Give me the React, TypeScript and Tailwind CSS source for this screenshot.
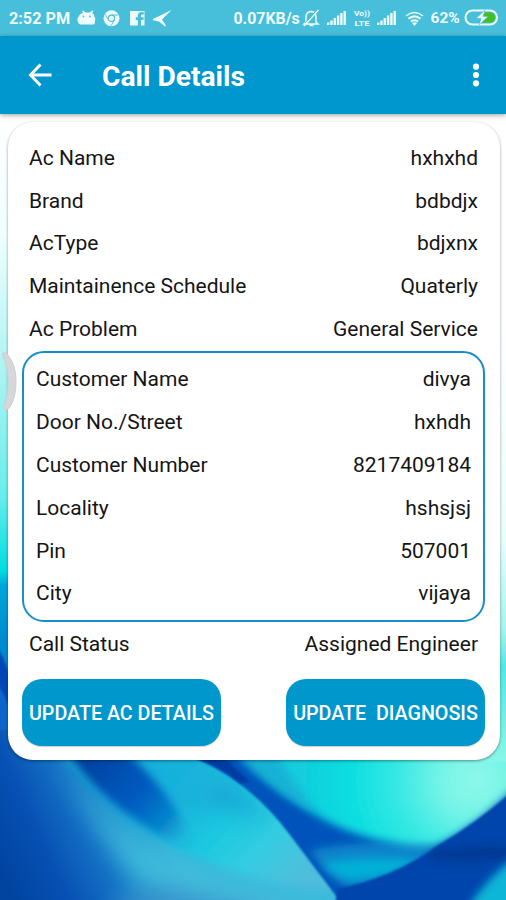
import { ReactNode } from 'react';

interface Detail {
  label: string;
  value: string;
}

const acDetails: Detail[] = [
  { label: 'Ac Name', value: 'hxhxhd' },
  { label: 'Brand', value: 'bdbdjx' },
  { label: 'AcType', value: 'bdjxnx' },
  { label: 'Maintainence Schedule', value: 'Quaterly' },
  { label: 'Ac Problem', value: 'General Service' },
];

const customerDetails: Detail[] = [
  { label: 'Customer Name', value: 'divya' },
  { label: 'Door No./Street', value: 'hxhdh' },
  { label: 'Customer Number', value: '8217409184' },
  { label: 'Locality', value: 'hshsjsj' },
  { label: 'Pin', value: '507001' },
  { label: 'City', value: 'vijaya' },
];

export default function App() {
  return (
    <div className="relative flex h-[900px] w-[506px] flex-col overflow-hidden font-['Roboto',sans-serif]">
      <Wallpaper />
      <StatusBar />
      <AppBar />
      <main className="relative mt-2 ml-[7.5px] h-[638px] w-[492px] rounded-[25px] bg-white px-[14.5px] pt-[15px] shadow-[0_1px_3px_rgba(0,0,0,0.4)]">
        <div className="h-[213.5px] px-[7px]">
          {acDetails.map((item) => (
            <DetailRow key={item.label} {...item} />
          ))}
        </div>
        <section className="h-[271px] rounded-[22px] border-2 border-[#168fc8] px-[12px] pt-[6px]">
          {customerDetails.map((item) => (
            <DetailRow key={item.label} {...item} />
          ))}
        </section>
        <div className="px-[7px] pt-[1.5px]">
          <DetailRow label="Call Status" value="Assigned Engineer" />
        </div>
        <div className="mt-[13px] flex justify-between">
          <ActionButton>UPDATE AC DETAILS</ActionButton>
          <ActionButton>UPDATE&nbsp; DIAGNOSIS</ActionButton>
        </div>
      </main>

      {/* Edge handle of the floating quick menu */}
      <svg className="absolute top-[351px] left-0" width="18" height="62" viewBox="0 0 18 62">
        <path d="M2 3Q5 0 8 4Q16 14 16 30Q16 47 10 56Q6 61 3 57Q8 45 8 30Q8 15 2 3Z" fill="#d6d7d8" stroke="#cbd0d0" />
      </svg>
    </div>
  );
}

function DetailRow({ label, value }: Detail) {
  return (
    <div className="flex h-[42.8px] items-center justify-between text-[21px] leading-none whitespace-pre text-[#151515]">
      <span>{label}</span>
      <span>{value}</span>
    </div>
  );
}

function ActionButton({ children }: { children: ReactNode }) {
  return (
    <button className="h-[67px] w-[199px] rounded-[20px] bg-[#0097cd] pt-[2px] text-[19.7px] font-medium whitespace-nowrap text-white shadow-[0_1px_1px_rgba(0,0,0,0.2)]">
      {children}
    </button>
  );
}

function AppBar() {
  return (
    <header className="relative flex h-[78px] items-center bg-[#0097cf] shadow-[0_1px_5px_rgba(0,0,0,0.4)]">
      <svg className="ml-[28px]" width="24" height="24" viewBox="0 0 24 24" fill="none" stroke="white" strokeWidth="2.9">
        <path d="M12.5 1.5L2.5 12L12.5 22.5M2.5 12H23.5" />
      </svg>
      <h1 className="ml-[50px] pt-1 text-[28.2px] font-bold text-white">Call Details</h1>
      <svg className="mr-[26px] ml-auto" width="8" height="26" viewBox="0 0 8 26" fill="white">
        <circle cx="4" cy="4.7" r="3.1" />
        <circle cx="4" cy="13" r="3.1" />
        <circle cx="4" cy="21.3" r="3.1" />
      </svg>
    </header>
  );
}

function StatusBar() {
  return (
    <div className="relative flex h-9 items-center bg-[#48bfda] pl-[9px] text-[16.2px] font-bold text-[#effcff]">
      <span className="w-[67px] pt-[2px] whitespace-nowrap">2:52 PM</span>
      <svg width="100" height="24" viewBox="0 0 100 24" fill="#effcff">
        {/* Android head */}
        <path d="M2.5 11Q4 7 7.5 7L6 5L7 4.5L9.5 6.5H13.5L16.5 4.5L17.5 5L16 7Q18.5 8 18.5 11Q20 12 19 14V16Q19 18.5 17 18.5H5Q2.5 18.5 2 16Q.5 13 2.5 11Z" />
        <circle cx="7.5" cy="10.5" r=".9" fill="#48bfda" />
        <circle cx="14" cy="10.5" r=".9" fill="#48bfda" />
        {/* Chrome */}
        <circle cx="35.5" cy="12.3" r="8" />
        <circle cx="35.5" cy="12.3" r="3.2" fill="none" stroke="#48bfda" strokeWidth="1.1" />
        <path d="M35.5 9H42M32.6 14L29 8.3M38.4 14L35 19.8" stroke="#48bfda" strokeWidth=".9" />
        {/* Facebook */}
        <path d="M54 5H68.5V19.5H65V14H67.3L67.7 11.300H65V10Q65 8.6 66.5 8.6H67.8V6.2Q61.8 5 61.8 9.8V11.3H59.8V14H61.8V19.5H54Z" />
        {/* Paper plane */}
        <path d="M95.5 4L77 13Q76 14 78 14.5L83 15.5L89 20.5L90 19.5L86 13.5Z" />
      </svg>
      <span className="ml-[57.5px] w-[67px] pt-[2px] text-[15.9px] whitespace-nowrap">0.07KB/s</span>
      <svg width="125" height="24" viewBox="0 0 125 24" fill="none" stroke="#effcff">
        {/* Muted bell */}
        <path d="M5 16V10Q6 5.5 10.5 5.5Q15 6 15 11V16L17 18H3L5 16ZM8.5 19.5H12.5M17.5 4L3 20" strokeWidth="1.5" />
        <path d="M15 5L4 17" stroke="#48bfda" />
        <SignalBars x={26} />
        <SignalBars x={76} />
        <g fill="#effcff" stroke="none" fontFamily="Roboto, sans-serif" fontSize="7.5" fontWeight="700">
          <text x="53" y="10.3" textLength="16" lengthAdjust="spacingAndGlyphs">Vo))</text>
          <text x="53.5" y="19.5" textLength="15" lengthAdjust="spacingAndGlyphs">LTE</text>
        </g>
        {/* Wi-Fi */}
        <g strokeWidth="2">
          <path d="M105 10Q113.5 3 122 10" strokeWidth="1.5" />
          <path d="M107.5 12.8Q113.5 8 119.5 12.8" />
          <path d="M110 15.5Q113.5 13 117 15.5" />
        </g>
        <path d="M111 17Q113.5 15.5 116 17L113.5 20Z" fill="#effcff" stroke="none" />
      </svg>
      <span className="ml-[5px] w-[33px] pt-[2px] text-[15.5px] whitespace-nowrap">62%</span>
      <svg width="36" height="20" viewBox="0 0 36 20">
        <rect x="1.5" y="2.5" width="31.5" height="14" rx="7" fill="none" stroke="#effcff" strokeWidth="2" />
        <path d="M20 4.5H26Q31 5 31 9.5Q31 14.5 26 14.5H15Z" fill="#45bf20" />
        <path d="M21 2L12 10.5H17L15 17L24 8.5H19Z" fill="#effcff" stroke="#48bfda" strokeWidth=".6" />
      </svg>
    </div>
  );
}

function SignalBars({ x }: { x: number }) {
  return (
    <g fill="#effcff" stroke="none">
      {[2.5, 4.5, 7, 9.5, 12, 14].map((h, i) => (
        <rect key={h} x={x + i * 3.3} y={19 - h} width="2.4" height={h} />
      ))}
    </g>
  );
}

function Wallpaper() {
  return (
    <svg className="absolute inset-0" width="506" height="900" viewBox="0 0 506 900">
      <defs>
        <linearGradient id="sky" x1="0" y1="0" x2="0" y2="1">
          <stop offset=".13" stopColor="#ffffff" />
          <stop offset=".26" stopColor="#f0ffff" />
          <stop offset=".42" stopColor="#a8f3f2" />
          <stop offset=".55" stopColor="#68eeed" />
          <stop offset=".635" stopColor="#00dce2" />
          <stop offset=".65" stopColor="#00a6d9" />
          <stop offset=".71" stopColor="#008bd0" />
        </linearGradient>
        <linearGradient id="rightSky" gradientUnits="userSpaceOnUse" x1="0" y1="0" x2="0" y2="900">
          <stop offset=".35" stopColor="#ffffff" />
          <stop offset=".6" stopColor="#e8fefd" />
          <stop offset=".7" stopColor="#a4f5ef" />
          <stop offset=".74" stopColor="#50e9e4" />
          <stop offset=".84" stopColor="#86f6e8" />
        </linearGradient>
        <linearGradient id="deep" gradientUnits="userSpaceOnUse" x1="0" y1="870" x2="150" y2="800">
          <stop offset="0" stopColor="#00449f" />
          <stop offset=".3" stopColor="#0750b4" />
          <stop offset=".58" stopColor="#1572c4" />
          <stop offset=".8" stopColor="#279fd3" />
          <stop offset="1" stopColor="#38b8da" />
        </linearGradient>
        <linearGradient id="ribbon" gradientUnits="userSpaceOnUse" x1="140" y1="750" x2="290" y2="890">
          <stop offset="0" stopColor="#12aedb" />
          <stop offset=".3" stopColor="#1bb4dc" />
          <stop offset=".55" stopColor="#1cc8e0" />
          <stop offset=".75" stopColor="#33cde1" />
          <stop offset="1" stopColor="#50bedc" />
        </linearGradient>
        <linearGradient id="fold" gradientUnits="userSpaceOnUse" x1="90" y1="760" x2="190" y2="850">
          <stop offset="0" stopColor="#0043a3" />
          <stop offset=".45" stopColor="#005cc0" />
          <stop offset=".75" stopColor="#078acd" />
          <stop offset="1" stopColor="#1cbcdc" stopOpacity="0" />
        </linearGradient>
        <radialGradient id="aqua" gradientUnits="userSpaceOnUse" cx="475" cy="780" r="175">
          <stop offset="0" stopColor="#8ff8ea" />
          <stop offset=".2" stopColor="#75f4e7" />
          <stop offset=".45" stopColor="#36e8e3" />
          <stop offset=".7" stopColor="#0edfe0" />
          <stop offset="1" stopColor="#12cddd" />
        </radialGradient>
        <filter id="soft1" x="-20%" y="-20%" width="140%" height="140%"><feGaussianBlur stdDeviation="1" /></filter>
        <filter id="soft4" x="-40%" y="-40%" width="180%" height="180%"><feGaussianBlur stdDeviation="4" /></filter>
        <filter id="soft9" x="-60%" y="-60%" width="220%" height="220%"><feGaussianBlur stdDeviation="11" /></filter>
      </defs>
      <rect width="506" height="900" fill="url(#sky)" />
      <path d="M-5 645Q8 660 12 690V750H-5Z" fill="#0047b5" filter="url(#soft1)" />
      <path d="M-5 680Q6 695 12 715V750H-5Z" fill="#0765c8" filter="url(#soft1)" />
      <rect y="730" width="506" height="170" fill="url(#deep)" />

      {/* Light band along the lower left swirl */}
      <path d="M40 735Q72 790 115 825Q170 872 340 900V935Q190 935 135 875Q90 820 40 735Z" fill="#45bfdc" opacity=".8" filter="url(#soft9)" />
      <path d="M100 930Q130 870 190 892L330 925Z" fill="#388fcb" opacity=".8" filter="url(#soft9)" />
      <path d="M48 735Q86 788 134 822Q192 862 262 880Q300 890 350 890V735Z" fill="url(#ribbon)" filter="url(#soft4)" />
      <path d="M54 732Q88 790 140 823Q180 850 215 860Q190 835 180 817Q165 785 108 735Z" fill="url(#fold)" filter="url(#soft4)" />
      <path d="M145 780Q180 802 205 803Q235 805 268 825Q248 785 215 784Q215 795 190 797Q165 792 145 780Z" fill="#1688cb" opacity=".55" filter="url(#soft9)" />

      {/* Dark fold crossing to the right */}
      <path d="M165 740L200 760Q252 784 290 835L343 905H510V735Z" fill="#0052ba" filter="url(#soft1)" />
      <path d="M190 756H222L250 782L240 783Q225 769 190 756Z" fill="#003da3" filter="url(#soft1)" />
      <path d="M310 850Q370 838 440 846L430 868Q380 890 345 886Q325 875 310 850Z" fill="#0e84cb" filter="url(#soft4)" />
      <path d="M222 730Q253 775 302 806Q358 846 435 846Q485 824 545 756V730Z" fill="url(#aqua)" filter="url(#soft4)" />
      <path d="M218 733Q250 780 320 815Q280 770 270 733Z" fill="#14a9d3" opacity=".75" filter="url(#soft4)" />
      <path d="M322 863Q364 856 418 860Q400 876 350 880Q335 876 322 863Z" fill="#00b1d6" filter="url(#soft4)" />
      <path d="M338 889Q394 877 437 846Q478 822 515 789V905H335Z" fill="#0045ac" filter="url(#soft1)" />
      <path d="M435 849Q470 844 520 846V858Q465 865 425 859Z" fill="#003790" opacity=".8" filter="url(#soft4)" />
      <path d="M465 915Q480 882 525 850V915Z" fill="#08b5d6" filter="url(#soft4)" />

      {/* Pale strip beside the card's right edge */}
      <rect x="470" width="36" height="762" fill="url(#rightSky)" />
    </svg>
  );
}
